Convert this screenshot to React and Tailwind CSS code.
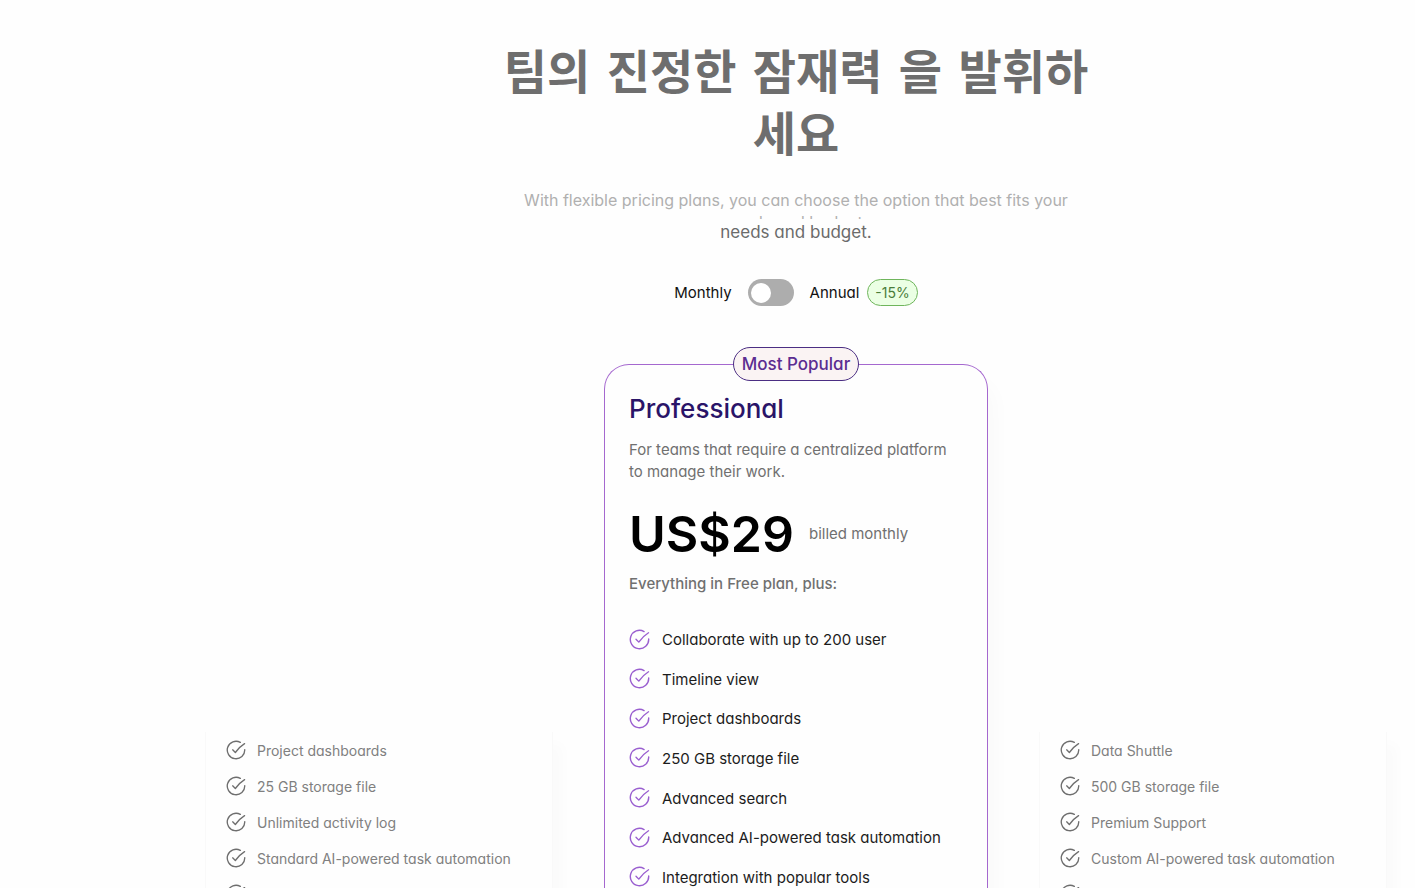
// src/App.jsx
import { useState } from "react";

const PRO_FEATURES = [
  "Collaborate with up to 200 user",
  "Timeline view",
  "Project dashboards",
  "250 GB storage file",
  "Advanced search",
  "Advanced AI-powered task automation",
  "Integration with popular tools",
];

const STARTER_FEATURES = [
  "Project dashboards",
  "25 GB storage file",
  "Unlimited activity log",
  "Standard AI-powered task automation",
  "Integration with popular tools",
];

const ENTERPRISE_FEATURES = [
  "Data Shuttle",
  "500 GB storage file",
  "Premium Support",
  "Custom AI-powered task automation",
  "Integration with popular tools",
];

export default function App() {
  const [annual, setAnnual] = useState(false);

  return (
    <main className="h-screen overflow-hidden bg-[#fefefe] pl-[205px] pr-[28px] pt-[42px] font-['Inter','Noto_Sans_CJK_KR',sans-serif] [font-feature-settings:'cv11']">
      {/* Heading */}
      <header className="flex flex-col items-center text-center">
        <h1 className="max-w-[600px] font-['DejaVu_Sans','Noto_Sans_CJK_KR',sans-serif] text-[47px] leading-[62px] font-bold text-[#6e6e6e]">
          팀의 진정한 잠재력 을 발휘하세요
        </h1>
        <p className="mt-[23px] h-[30px] max-w-[560px] overflow-hidden text-[16px] leading-[22px] text-[#b0b0b0]">
          With flexible pricing plans, you can choose the option that best fits
          your needs and budget.
        </p>
        <p className="text-[17px] leading-[26px] text-[#6b6b6b]">
          needs and budget.
        </p>
      </header>

      {/* Billing switch */}
      <div className="mt-[34px] flex items-center justify-center text-[15px] leading-[24px] text-[#111111]">
        <label htmlFor="billing">Monthly</label>
        <input
          id="billing"
          type="checkbox"
          role="switch"
          checked={annual}
          onChange={(e) => setAnnual(e.target.checked)}
          className="
            mx-[16px] flex h-[27px] w-[46px] cursor-pointer appearance-none items-center
            rounded-full bg-[#adadad] px-[3px]
            before:size-[20px] before:rounded-full before:bg-white
            checked:justify-end checked:bg-[#9a5fd0]
          "
        />
        <label htmlFor="billing">Annual</label>
        <span className="ml-[8px] rounded-full border border-[#6fb55c] bg-[#ebffe4] px-[7px] text-[14px] leading-[25px] text-[#4a7c3a]">
          -15%
        </span>
      </div>

      {/* Plans */}
      <div className="mt-[58px] grid grid-cols-[348fr_384fr_348fr] gap-[51px]">
        <SidePlan features={STARTER_FEATURES} />

        <section className="relative rounded-t-[25px] border border-b-0 border-[#a568cf] bg-[#fefefe] px-[24px] pt-[28px] pb-[48px] shadow-[8px_16px_20px_rgba(0,0,0,0.02)]">
          <div className="absolute inset-x-0 top-[-18px] flex justify-center">
            <span className="rounded-full border border-[#4b2e83] bg-[#faf3f3] px-[8px] text-[17px] leading-[32px] font-medium text-[#5b2d91]">
              Most Popular
            </span>
          </div>

          <h2 className="text-[26px] leading-[32px] font-medium text-[#2a1468]">
            Professional
          </h2>
          <p className="mt-[14px] text-[15px] leading-[22px] text-[#707070]">
            For teams that require a centralized platform to manage their work.
          </p>

          <div className="mt-[27px] flex items-center gap-[15px]">
            <span className="text-[50px] leading-[48px] font-semibold text-black">
              US$29
            </span>
            <span className="text-[15px] leading-[22px] text-[#707070]">
              billed monthly
            </span>
          </div>
          <p className="mt-[15px] text-[15px] leading-[22px] font-medium text-[#707070]">
            Everything in Free plan, plus:
          </p>

          <ul className="mt-[33px] flex h-[262px] flex-col justify-between">
            {PRO_FEATURES.map((item) => (
              <li key={item} className="flex h-[24px] items-center gap-[12px]">
                <CheckIcon className="mb-[2px] size-[21px] shrink-0 text-[#9a5fd0]" />
                <span className="text-[15px] leading-[24px] whitespace-nowrap text-[#1c1c1c]">
                  {item}
                </span>
              </li>
            ))}
          </ul>
        </section>

        <SidePlan features={ENTERPRISE_FEATURES} />
      </div>
    </main>
  );
}

function SidePlan({ features }) {
  return (
    <section className="mt-[368px] border-x border-[#f9f9f9] px-[20px] pt-[9px] shadow-[10px_12px_12px_rgba(0,0,0,0.015)]">
      <ul className="flex flex-col gap-[16px]">
        {features.map((item) => (
          <li key={item} className="flex h-[20px] items-center gap-[11px]">
            <CheckIcon className="mb-[2px] size-[20px] shrink-0 text-[#6e6e6e]" />
            <span className="text-[14px] leading-[20px] whitespace-nowrap text-[#808080]">
              {item}
            </span>
          </li>
        ))}
      </ul>
    </section>
  );
}

function CheckIcon({ className }) {
  return (
    <svg
      className={className}
      viewBox="0 0 24 24"
      fill="none"
      stroke="currentColor"
      strokeWidth="1.6"
      strokeLinecap="round"
      strokeLinejoin="round"
      aria-hidden="true"
    >
      <path d="M22.5 11.500a10.500 10.500 0 1 1-5.300-8.600" />
      <path d="M8 11.800l3.200 3.200C14.200 10.600 17.600 7.200 22.300 4.300" />
    </svg>
  );
}
